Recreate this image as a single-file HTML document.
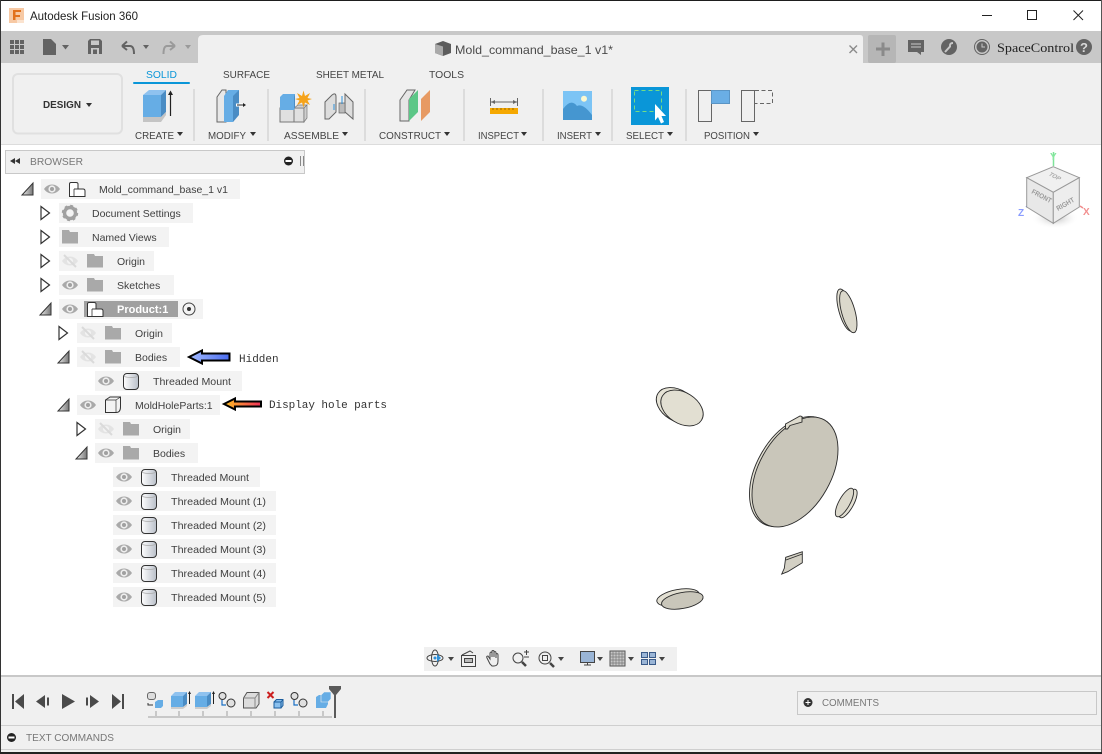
<!DOCTYPE html>
<html><head><meta charset="utf-8"><title>Autodesk Fusion 360</title>
<style>
html,body{margin:0;padding:0;background:#fff}
svg{display:block}
text{font-family:"Liberation Sans",Arial,sans-serif;font-size:10.5px;fill:#444}
.t{fill:#4a4a4a}
.r{fill:#3f3f3f;font-size:10.5px}
.m{font-family:"Liberation Mono",monospace;font-size:11px;fill:#333}
</style></head><body>
<svg xmlns="http://www.w3.org/2000/svg" width="1102" height="754" viewBox="0 0 1102 754">
<defs>
<linearGradient id="cyl" x1="0" x2="1" y1="0" y2="0"><stop offset="0" stop-color="#fff"/><stop offset="1" stop-color="#b9bfc9"/></linearGradient>
<linearGradient id="tri" x1="0" x2="1" y1="0" y2="0"><stop offset="0" stop-color="#eee"/><stop offset="1" stop-color="#777"/></linearGradient>
<linearGradient id="blueA" x1="1" x2="0" y1="0" y2="0"><stop offset="0" stop-color="#4a6cf0"/><stop offset="1" stop-color="#a5bcff"/></linearGradient>
<linearGradient id="orA" x1="1" x2="0" y1="0" y2="0"><stop offset="0" stop-color="#f0305a"/><stop offset="1" stop-color="#ffc020"/></linearGradient>
<radialGradient id="shadow"><stop offset="0" stop-color="#bbb"/><stop offset="1" stop-color="#fff" stop-opacity="0"/></radialGradient>
<g id="eye"><path d="M-8 0C-4-6 4-6 8 0C4 6-4 6-8 0Z" fill="#a9a9a9"/><circle r="3.6" fill="#eee"/><circle r="2" fill="#a0a0a0"/></g>
<g id="eyeh"><path d="M-8 0C-4-6 4-6 8 0C4 6-4 6-8 0Z" fill="#e3e3e3"/><circle r="3" fill="#f3f3f3"/><path d="M-6-6L6 6" stroke="#dadada" stroke-width="2"/></g>
<path id="fold" d="M0-7H7L8-5H16V6.500H0Z" fill="#a9a9a9"/>
<g id="exp"><path d="M-4-6.500V6.500L4.500 0Z" fill="#fff" stroke="#333" stroke-width="1.200"/></g>
<g id="col"><path d="M-5 6H6V-6Z" fill="url(#tri)" stroke="#333" stroke-width="1"/></g>
<g id="cyln"><rect x="-7.5" y="-7.5" width="15" height="16" rx="3.5" fill="url(#cyl)" stroke="#333" stroke-width="1"/><path d="M-7-4.500Q0-2.500 7-4.500" fill="none" stroke="#aaa" stroke-width=".7"/></g>
<g id="comp"><path d="M-7.500 6.500V-6Q-7.500-7.500-6-7.500H-1Q1-7.500 1-6V-1H6Q8-1 8 1V6.500Z" fill="#fff" stroke="#333"/><path d="M-3-1H1M-3-1L-3 6.500" fill="none" stroke="#333" stroke-width=".8"/><path d="M1 -1L-3 -1" stroke="#333" stroke-width=".8"/></g>
</defs>

<!-- window frame -->
<rect width="1102" height="754" fill="#f0f0f0"/>
<rect width="1102" height="1" fill="#1e1e1e"/>
<rect x="0" y="1" width="1102" height="30" fill="#fff"/>
<rect x="0" y="0" width="1" height="754" fill="#333"/>
<rect x="1101" y="0" width="1" height="754" fill="#555"/>
<rect x="0" y="752" width="1102" height="2" fill="#222"/>

<!-- title -->
<rect x="9" y="8" width="15" height="15" fill="#f7c9a4"/>
<path d="M13 10H21V12H15.500V15H20V17H15.500V20H13Z" fill="#e2711d"/>
<rect x="17" y="20" width="7" height="3" fill="#fbe3cf"/>
<text x="30" y="20" style="font-size:12px;fill:#222" textLength="108" lengthAdjust="spacingAndGlyphs">Autodesk Fusion 360</text>
<rect x="982" y="15" width="10" height="1" fill="#222"/>
<rect x="1027.500" y="10.500" width="9" height="9" fill="none" stroke="#222"/>
<path d="M1073.500 10.500L1083 20M1083 10.500L1073.500 20" stroke="#222" fill="none"/>

<!-- top toolbar -->
<rect x="1" y="31" width="1100" height="32" fill="#c8c8c8"/>
<path d="M198 63V40Q198 35 203 35H860Q863 35 863 38V63Z" fill="#f0f0f0"/>
<rect x="868" y="35" width="28" height="28" rx="2" fill="#b6b6b6"/>
<path d="M876 49H890M883 42.500V56" stroke="#8a8a8a" stroke-width="3"/>
<g fill="#636363">
<rect x="10" y="40" width="4" height="4"/><rect x="15" y="40" width="4" height="4"/><rect x="20" y="40" width="4" height="4"/>
<rect x="10" y="45" width="4" height="4"/><rect x="15" y="45" width="4" height="4"/><rect x="20" y="45" width="4" height="4"/>
<rect x="10" y="50" width="4" height="4"/><rect x="15" y="50" width="4" height="4"/><rect x="20" y="50" width="4" height="4"/>
<path d="M43 39H51L56 44V55H43Z"/>
<path d="M62 45H69L65.500 49.500Z"/>
<path d="M88 41L90 39H100L102 41V54H88ZM91 40.500V45H99V40.500ZM91 48V54H93V49.500H97V54H99V48Z" fill-rule="evenodd"/>
<path d="M143 45H149L146 49Z"/>
</g>
<path d="M122 46L127 41.500M122 46L127 50M122.500 46H130Q134 46 134 54" stroke="#636363" stroke-width="2" fill="none"/>
<path d="M175 46L170 41.500M175 46L170 50M174.500 46H167Q163.500 46 163.500 54" stroke="#9a9a9a" stroke-width="2" fill="none"/>
<path d="M185 45H191L188 49Z" fill="#9a9a9a"/>

<!-- doc tab -->
<path d="M435 44L443 41L451 44V53L443 56L435 53Z" fill="#5c5c5c"/><path d="M435 44L443 46.500V56L435 53Z" fill="#aaa"/>
<text x="455" y="54" style="font-size:12px" class="t" textLength="158" lengthAdjust="spacingAndGlyphs">Mold_command_base_1 v1*</text>
<path d="M849.500 45.500L857 53M857 45.500L849.500 53" stroke="#8a8a8a" stroke-width="1.400"/>

<!-- right toolbar -->
<path d="M908 40H924V52H921V55L917 52H908Z" fill="#636363"/><path d="M911 44H921M911 47H921" stroke="#c8c8c8"/>
<circle cx="949" cy="47" r="8" fill="#636363"/><path d="M945 52L950 46.500Q949.500 43 953 43" stroke="#c8c8c8" stroke-width="2" fill="none"/>
<circle cx="982" cy="47" r="7.500" fill="none" stroke="#636363"/><circle cx="982" cy="47" r="5.500" fill="#636363"/><path d="M982 43.500V47H985" stroke="#c8c8c8" fill="none"/>
<text x="997" y="52" style="font-family:'Liberation Serif',serif;font-size:13px;fill:#222" textLength="77" lengthAdjust="spacingAndGlyphs">SpaceControl</text>
<circle cx="1084" cy="47" r="8" fill="#636363"/><text x="1084" y="52" text-anchor="middle" style="font-size:13px;font-weight:bold;fill:#d8d8d8">?</text>

<!-- ribbon -->
<rect x="1" y="144" width="1100" height="1" fill="#dcdcdc"/>
<rect x="13" y="74" width="109" height="59.500" rx="5" fill="#f0f0f0" stroke="#e0e0e0" stroke-width="2"/>
<text x="43" y="108" style="font-weight:bold;fill:#333" textLength="38" lengthAdjust="spacingAndGlyphs">DESIGN</text>
<path d="M86 103H92L89 107Z" fill="#333"/>
<text x="146" y="78" style="fill:#0a96d8" textLength="31" lengthAdjust="spacingAndGlyphs">SOLID</text>
<rect x="133" y="82" width="57" height="2" rx="1" fill="#0a96d8"/>
<text x="223" y="78" textLength="47" lengthAdjust="spacingAndGlyphs">SURFACE</text><text x="316" y="78" textLength="68" lengthAdjust="spacingAndGlyphs">SHEET METAL</text><text x="429" y="78" textLength="35" lengthAdjust="spacingAndGlyphs">TOOLS</text>
<g fill="#dcdcdc"><rect x="193" y="89" width="2" height="52"/><rect x="267" y="89" width="2" height="52"/><rect x="364" y="89" width="2" height="52"/><rect x="463" y="89" width="2" height="52"/><rect x="542" y="89" width="2" height="52"/><rect x="611" y="89" width="2" height="52"/><rect x="685" y="89" width="2" height="52"/></g>
<text x="135" y="139" textLength="39" lengthAdjust="spacingAndGlyphs">CREATE</text><text x="208" y="139" textLength="38" lengthAdjust="spacingAndGlyphs">MODIFY</text><text x="284" y="139" textLength="55" lengthAdjust="spacingAndGlyphs">ASSEMBLE</text><text x="379" y="139" textLength="62" lengthAdjust="spacingAndGlyphs">CONSTRUCT</text><text x="478" y="139" textLength="41" lengthAdjust="spacingAndGlyphs">INSPECT</text><text x="557" y="139" textLength="35" lengthAdjust="spacingAndGlyphs">INSERT</text><text x="626" y="139" textLength="38" lengthAdjust="spacingAndGlyphs">SELECT</text><text x="704" y="139" textLength="46" lengthAdjust="spacingAndGlyphs">POSITION</text>
<g fill="#333"><path d="M177 132H183L180 136Z"/><path d="M250 132H256L253 136Z"/><path d="M342 132H348L345 136Z"/><path d="M444 132H450L447 136Z"/><path d="M521 132H527L524 136Z"/><path d="M595 132H601L598 136Z"/><path d="M667 132H673L670 136Z"/><path d="M753 132H759L756 136Z"/></g>
<!-- create -->
<path d="M143 95L149 90H166L161 95Z" fill="#8fc2ef"/><rect x="143" y="95" width="18" height="22" fill="#66ade5"/><path d="M161 95L166 90V112L161 117Z" fill="#4a8cc4"/><path d="M143 117H161L166 112V115L161 122H143Z" fill="#c4c4c4"/>
<path d="M170.500 116V93" stroke="#222" stroke-width="1.200"/><path d="M168 95L170.500 90.500L173 95Z" fill="#222"/>
<!-- modify -->
<path d="M217 122V97L222 90H226V122Z" fill="#e8e8e8" stroke="#666"/><path d="M224 96L228 90H239V114L233 122H224Z" fill="#66ade5"/><path d="M233 96L239 90V115L233 122Z" fill="#4a8cc4"/>
<path d="M236 105H243" stroke="#fff" stroke-width="3"/><path d="M237 105H243" stroke="#222"/><path d="M243 103L246 105L243 107Z" fill="#222"/>
<!-- assemble -->
<path d="M280 108H294V122H280ZM294 108H304V122H294Z" fill="#e0e0e0" stroke="#777"/><path d="M294 108L298 105H307L304 108ZM304 108L307 105V118L304 122Z" fill="#cfcfcf" stroke="#777" stroke-width=".7"/>
<path d="M280 97L283 94H295V107L294 110H280Z" fill="#66ade5"/><path d="M295 94V107L294 110V97Z" fill="#4a8cc4"/>
<path d="M303.500 90.500L305 96L310 93L307.500 98L312 99L307.500 100.500L310 105L305 102.500L303.500 107.500L302 102.500L297 105L299.500 100.500L295 99L299.500 98L297 93L302 96Z" fill="#f5a31a"/>
<path d="M325 102L332 95Q336 92 336 97V112L329 119H325Z" fill="#ddd" stroke="#666"/><path d="M345 94L353 102V119L345 112Z" fill="#ddd" stroke="#666"/><path d="M339 103H345V113H339Z" fill="#bbb" stroke="#666" stroke-width=".7"/>
<path d="M334 104V110M342 96V104" stroke="#2d8fd8" stroke-width="1"/>
<!-- construct -->
<path d="M400 100L407 90H415L409 100V121H400Z" fill="#e6e6e6" stroke="#666"/><path d="M409 99L418 90V112L409 121Z" fill="#5cc787"/>
<path d="M421 99L430 90V112L421 121Z" fill="#e79a63"/>
<!-- inspect -->
<path d="M490.500 98V106M517.500 98V106" stroke="#666"/><path d="M491 102H517" stroke="#666"/><path d="M491 102L495 100V104ZM517 102L513 100V104Z" fill="#666"/>
<rect x="490" y="108" width="28" height="6" fill="#f5a800"/><path d="M493 108v2M497 108v2M501 108v2M505 108v2M509 108v2M513 108v2" stroke="#885a00" stroke-width=".8"/>
<!-- insert -->
<rect x="563" y="91" width="29" height="29" fill="#7cc4f5"/><path d="M563 120V109Q571 98 577 106Q583 103 592 115V120Z" fill="#4596d0"/><circle cx="584" cy="98.700" r="3" fill="#fbf8d0"/>
<!-- select -->
<rect x="631" y="87" width="38" height="38" fill="#0a96d8"/><rect x="634.500" y="90.500" width="27" height="21" fill="none" stroke="#74dc84" stroke-dasharray="4 3"/>
<path d="M655 104L666 116H661.500L664 122L661 123.500L658 117L655 120.500Z" fill="#fff"/>
<!-- position -->
<rect x="698.500" y="90.500" width="13" height="31" fill="none" stroke="#666"/><rect x="711.500" y="90.500" width="18" height="13" fill="#6aaee5" stroke="#5a94c4"/>
<rect x="741.500" y="90.500" width="13" height="31" fill="none" stroke="#666"/><path d="M755 90.500H772.500V103.500H755" fill="none" stroke="#666" stroke-dasharray="4 2.500"/>

<!-- canvas -->
<rect x="1" y="145" width="1100" height="530" fill="#fff"/>
<!-- browser bar -->
<rect x="5.500" y="150.500" width="299" height="23" fill="#f0f0f0" stroke="#c8c8c8"/>
<path d="M10 161L15 158V164ZM15 161L20 158V164Z" fill="#333"/>
<text x="30" y="165" style="fill:#777" textLength="53" lengthAdjust="spacingAndGlyphs">BROWSER</text>
<circle cx="288.500" cy="161" r="4.500" fill="#222"/><rect x="285.500" y="160" width="6" height="2" fill="#fff"/>
<path d="M300.500 156V166M303.500 156V166" stroke="#888"/>

<!-- rows -->
<g fill="#f3f3f3">
<rect x="41" y="179" width="199" height="20"/><rect x="59" y="203" width="134" height="20"/><rect x="59" y="227" width="110" height="20"/><rect x="59" y="251" width="95" height="20"/><rect x="59" y="275" width="115" height="20"/><rect x="59" y="299" width="144" height="20"/><rect x="77" y="323" width="95" height="20"/><rect x="77" y="347" width="103" height="20"/><rect x="95" y="371" width="147" height="20"/><rect x="77" y="395" width="143" height="20"/><rect x="95" y="419" width="95" height="20"/><rect x="95" y="443" width="103" height="20"/><rect x="113" y="467" width="147" height="20"/><rect x="113" y="491" width="163" height="20"/><rect x="113" y="515" width="163" height="20"/><rect x="113" y="539" width="163" height="20"/><rect x="113" y="563" width="163" height="20"/><rect x="113" y="587" width="163" height="20"/>
</g>
<rect x="84" y="301" width="94" height="16" fill="#a0a0a0"/>

<use href="#col" x="27" y="189"/><use href="#eye" x="52" y="189"/><use href="#comp" x="77" y="190"/>
<use href="#exp" x="45" y="213"/><use href="#exp" x="45" y="237"/><use href="#exp" x="45" y="261"/><use href="#exp" x="45" y="285"/><use href="#col" x="45" y="309"/>
<use href="#exp" x="63" y="333"/><use href="#col" x="63" y="357"/><use href="#col" x="63" y="405"/>
<use href="#exp" x="81" y="429"/><use href="#col" x="81" y="453"/>

<g transform="translate(70 213)"><circle r="5.500" fill="none" stroke="#a0a0a0" stroke-width="3.400"/><circle r="7.200" fill="none" stroke="#a0a0a0" stroke-width="2" stroke-dasharray="2.800 2.850"/></g>
<use href="#fold" x="62" y="237"/>
<use href="#eyeh" x="70" y="261"/><use href="#fold" x="87" y="261"/>
<use href="#eye" x="70" y="285"/><use href="#fold" x="87" y="285"/>
<use href="#eye" x="70" y="309"/><use href="#comp" x="95" y="310"/>
<circle cx="189" cy="309" r="6" fill="#f3f3f3" stroke="#444"/><circle cx="189" cy="309" r="2" fill="#333"/>
<use href="#eyeh" x="88" y="333"/><use href="#fold" x="105" y="333"/>
<use href="#eyeh" x="88" y="357"/><use href="#fold" x="105" y="357"/>
<use href="#eye" x="106" y="381"/><use href="#cyln" x="131" y="381"/>
<use href="#eye" x="88" y="405"/>
<path d="M105.500 400L110 397H120.500V407Q120.500 412.500 116 412.500H105.500Z" fill="#f3f3f3" stroke="#333"/><path d="M105.500 400H116V412.500M116 400L120.500 397" fill="none" stroke="#333" stroke-width=".7"/>
<use href="#eyeh" x="106" y="429"/><use href="#fold" x="123" y="429"/>
<use href="#eye" x="106" y="453"/><use href="#fold" x="123" y="453"/>
<use href="#eye" x="124" y="477"/><use href="#cyln" x="149" y="477"/>
<use href="#eye" x="124" y="501"/><use href="#cyln" x="149" y="501"/>
<use href="#eye" x="124" y="525"/><use href="#cyln" x="149" y="525"/>
<use href="#eye" x="124" y="549"/><use href="#cyln" x="149" y="549"/>
<use href="#eye" x="124" y="573"/><use href="#cyln" x="149" y="573"/>
<use href="#eye" x="124" y="597"/><use href="#cyln" x="149" y="597"/>

<text class="r" x="99" y="193">Mold_command_base_1 v1</text>
<text class="r" x="92" y="217">Document Settings</text>
<text class="r" x="92" y="241">Named Views</text>
<text class="r" x="117" y="265">Origin</text>
<text class="r" x="117" y="289">Sketches</text>
<text x="117" y="313" style="font-size:11px;font-weight:bold;fill:#fff">Product:1</text>
<text class="r" x="135" y="337">Origin</text>
<text class="r" x="135" y="361">Bodies</text>
<text class="r" x="153" y="385" textLength="78" lengthAdjust="spacingAndGlyphs">Threaded Mount</text>
<text class="r" x="135" y="409">MoldHoleParts:1</text>
<text class="r" x="153" y="433">Origin</text>
<text class="r" x="153" y="457">Bodies</text>
<text class="r" x="171" y="481" textLength="78" lengthAdjust="spacingAndGlyphs">Threaded Mount</text>
<text class="r" x="171" y="505" textLength="95" lengthAdjust="spacingAndGlyphs">Threaded Mount (1)</text>
<text class="r" x="171" y="529" textLength="95" lengthAdjust="spacingAndGlyphs">Threaded Mount (2)</text>
<text class="r" x="171" y="553" textLength="95" lengthAdjust="spacingAndGlyphs">Threaded Mount (3)</text>
<text class="r" x="171" y="577" textLength="95" lengthAdjust="spacingAndGlyphs">Threaded Mount (4)</text>
<text class="r" x="171" y="601" textLength="95" lengthAdjust="spacingAndGlyphs">Threaded Mount (5)</text>

<!-- arrows -->
<path d="M189 357L202 350.500V353.500H229.500V360.500H202V363.500Z" fill="url(#blueA)" stroke="#000" stroke-width="2"/>
<path d="M224 404L235 398.500V401.500H261V406.500H235V409.500Z" fill="url(#orA)" stroke="#000" stroke-width="2"/>
<text class="m" x="239" y="362">Hidden</text>
<text class="m" x="269" y="408" textLength="118">Display hole parts</text>

<!-- model -->
<g stroke="#2a2a2a" stroke-width=".9">
<ellipse cx="845.500" cy="310" rx="21.700" ry="6.700" transform="rotate(74.500 845.500 310)" fill="#e2dfd2"/>
<ellipse cx="848.300" cy="311.700" rx="21.700" ry="6.700" transform="rotate(74.500 848.300 311.700)" fill="#dbd8cb"/>
<ellipse cx="677.500" cy="405.500" rx="23" ry="15.500" transform="rotate(32 677.500 405.500)" fill="#e6e3d6"/>
<ellipse cx="682" cy="408" rx="23" ry="15.500" transform="rotate(32 682 408)" fill="#e2dfd2"/>
<ellipse cx="792.500" cy="471.500" rx="59.800" ry="36" transform="rotate(-60.500 792.500 471.500)" fill="#e2dfd2"/>
<ellipse cx="795" cy="472" rx="59.800" ry="36" transform="rotate(-60.500 795 472)" fill="#c9c6ba"/>
<path d="M785.500 429V424L800 416L802 416.500V422L790 425.500L787.500 429Z" fill="#dedbce"/>
<ellipse cx="848" cy="503.500" rx="16" ry="5.500" transform="rotate(-61 848 503.500)" fill="#e2dfd2"/>
<ellipse cx="844.500" cy="502.500" rx="16" ry="5.500" transform="rotate(-61 844.500 502.500)" fill="#dbd8cb"/>
<path d="M785.700 557.300L802.300 551.700V562.700L787.700 571.700L781.700 574L784.300 568.300Z" fill="#d3d0c4"/>
<path d="M786 560L802.300 554" fill="none"/>
<ellipse cx="678" cy="597.500" rx="21.500" ry="8" transform="rotate(-10.500 678 597.500)" fill="#e2dfd2"/>
<ellipse cx="682.300" cy="600.500" rx="21.100" ry="8" transform="rotate(-10.500 682.300 600.500)" fill="#c9c6ba"/>
</g>

<!-- viewcube -->
<ellipse cx="1055" cy="218" rx="24" ry="11" fill="url(#shadow)"/>
<path d="M1053.500 152V166" stroke="#7fe39a" stroke-width="1.500"/><text x="1050" y="160" style="font-size:10px;fill:#86e89f;font-weight:bold">Y</text>
<path d="M1026 207L1029 205" stroke="#5a74e8" stroke-width="1.500"/><text x="1018" y="216" style="font-size:10px;fill:#8a9cff;font-weight:bold">Z</text>
<path d="M1080 206L1083 208" stroke="#f08a8a" stroke-width="1.500"/><text x="1083" y="215" style="font-size:10px;fill:#f28f8f;font-weight:bold">X</text>
<path d="M1053.300 166.700L1079.300 177.700L1053.300 192.300L1026.700 177.700Z" fill="#f0f0f0" stroke="#999"/>
<path d="M1026.700 177.700L1053.300 192.300V223.300L1026.700 207Z" fill="#e8e8e8" stroke="#999"/>
<path d="M1079.300 177.700L1053.300 192.300V223.300L1079.300 207Z" fill="#ededed" stroke="#999"/>
<text transform="translate(1048 175) rotate(28) skewX(-20)" style="font-size:6px;fill:#aaa;font-weight:bold">TOP</text>
<text transform="translate(1031 193) rotate(28) scale(.9 1)" style="font-size:7px;fill:#999;font-weight:bold">FRONT</text>
<text transform="translate(1058 211) rotate(-30) scale(.9 1)" style="font-size:7px;fill:#999;font-weight:bold">RIGHT</text>

<!-- nav bar -->
<rect x="424" y="647" width="253" height="24" fill="#f0f0f0"/>
<g fill="none" stroke="#444" stroke-width="1">
<ellipse cx="435" cy="658" rx="3.500" ry="8"/><ellipse cx="435" cy="658" rx="8" ry="3.500"/>
<rect x="461.500" y="655.500" width="14" height="11"/><rect x="464.500" y="658.500" width="8" height="4" fill="#bbb"/><path d="M462 655L470 651L473 653"/>
<path d="M490 664L487 658Q486 656 488 656L490 659V653Q491 651 492 653V657V651Q493 650 494 651V657V652Q496 651 496 653V658V654Q498 653 498 655V661Q498 666 494 666H492Z"/>
<circle cx="518" cy="658" r="5"/><path d="M522 662L526 666" stroke-width="2.500"/><path d="M524 652H529M526.500 650V655M524 657H529"/>
<circle cx="545" cy="658" r="6"/><rect x="542.500" y="655.500" width="5" height="5"/><path d="M550 663L554 667" stroke-width="2.500"/>
<rect x="580.500" y="651.500" width="14" height="11" fill="#9ab5d6"/><path d="M584 665H591M587.500 663V665"/>
</g>
<path d="M441 658L437 654V662Z" fill="#2d8fd8"/><circle cx="435" cy="658" r="1.500" fill="#2d8fd8"/>
<g fill="#444"><path d="M448 657H454L451 661Z"/><path d="M558 657H564L561 661Z"/><path d="M597 657H603L600 661Z"/><path d="M628 657H634L631 661Z"/><path d="M659 657H665L662 661Z"/></g>
<rect x="610" y="651" width="15" height="15" fill="#c8c8c8" stroke="#555"/>
<path d="M613 651V666M616 651V666M619 651V666M622 651V666M610 654H625M610 657H625M610 660H625M610 663H625" stroke="#777" stroke-width=".7"/>
<g fill="#9ab5d6" stroke="#3a5a88"><rect x="641.500" y="652.500" width="6" height="5"/><rect x="649.500" y="652.500" width="6" height="5"/><rect x="641.500" y="659.500" width="6" height="5"/><rect x="649.500" y="659.500" width="6" height="5"/></g>

<!-- bottom -->
<rect x="1" y="675" width="1100" height="2" fill="#c8c8c8"/>
<rect x="1" y="725" width="1100" height="1" fill="#cfcfcf"/>
<rect x="1" y="749" width="1100" height="1" fill="#cfcfcf"/>
<g fill="#4a4a4a">
<rect x="12" y="694" width="2" height="15"/><path d="M24 694V709L15 701.500Z"/>
<path d="M36 701.500L45 695V708ZM47 697.500H49V705.500H47Z"/>
<path d="M62 694L75 701.500L62 709Z"/>
<path d="M86 697.500H88V705.500H86ZM90 695L99 701.500L90 708Z"/>
<path d="M112 694L121 701.500L112 709ZM122 694H124V709H122Z"/>
</g>
<!-- timeline -->
<rect x="148" y="716" width="184" height="2" fill="#c8c8c8"/>
<g fill="#c8c8c8"><rect x="155" y="711" width="2" height="6"/><rect x="178" y="711" width="2" height="6"/><rect x="202" y="711" width="2" height="6"/><rect x="226" y="711" width="2" height="6"/><rect x="250" y="711" width="2" height="6"/><rect x="274" y="711" width="2" height="6"/><rect x="298" y="711" width="2" height="6"/><rect x="322" y="711" width="2" height="6"/></g>
<rect x="147.500" y="692.500" width="8" height="7" rx="2.500" fill="#ddd" stroke="#666"/><path d="M148 703V705H153" stroke="#333" fill="none"/>
<path d="M155 702L158 700H163V706L161 708H155Z" fill="#66ade5"/>
<g transform="translate(180 699)"><path d="M-9-3L-5-7H7L3-3Z" fill="#8fc2ef"/><rect x="-9" y="-3" width="12" height="11" fill="#66ade5"/><path d="M3-3L7-7V5L3 8Z" fill="#4a8cc4"/><path d="M-9 8H3L7 5V7L3 10H-9Z" fill="#ccc"/><path d="M9.500 5V-6" stroke="#222"/><path d="M8-5L9.500-8L11-5Z" fill="#222"/></g>
<g transform="translate(204 699)"><path d="M-9-3L-5-7H7L3-3Z" fill="#8fc2ef"/><rect x="-9" y="-3" width="12" height="11" fill="#66ade5"/><path d="M3-3L7-7V5L3 8Z" fill="#4a8cc4"/><path d="M-9 8H3L7 5V7L3 10H-9Z" fill="#ccc"/><path d="M9.500 5V-6" stroke="#222"/><path d="M8-5L9.500-8L11-5Z" fill="#222"/></g>
<g fill="#e0e0e0" stroke="#333"><circle cx="222.500" cy="696" r="3.500"/><circle cx="231" cy="703" r="4"/><circle cx="294.500" cy="696" r="3.500"/><circle cx="303" cy="703" r="4"/></g>
<path d="M222 700V705H226M294 700V705H298" stroke="#1a6fc4" stroke-width="1.200" fill="none"/>
<path d="M243.500 698L247 692.500H259V704L256 708H243.500Z" fill="#dcdcdc" stroke="#555"/><path d="M243.500 698H255V708M255 698L259 692.500" fill="none" stroke="#888"/>
<path d="M267.500 692L273.500 698M273.500 692L267.500 698" stroke="#cc1f1f" stroke-width="2"/>
<path d="M274 702H281V708H274ZM274 702L276.500 699.500H283V705.500L281 708M281 702L283 699.500" fill="#8ac0ee" stroke="#1a5c9c"/>
<path d="M316 697L319 695H326V701H328V704L326 708H316Z" fill="#66ade5"/>
<path d="M321 695L324 692H331V699L328 702H321Z" fill="#66ade5" stroke="#f0f0f0" stroke-width=".6"/>
<path d="M329 686H341V689L336 695V718H334V695L329 689Z" fill="#5a5a5a"/>

<!-- comments -->
<rect x="797.500" y="691.500" width="299" height="23" fill="#f0f0f0" stroke="#c8c8c8"/>
<circle cx="808" cy="702.500" r="4.500" fill="#333"/><path d="M805.500 702.500H810.500M808 700V705" stroke="#fff"/>
<text x="822" y="706" style="fill:#777" textLength="57" lengthAdjust="spacingAndGlyphs">COMMENTS</text>
<circle cx="11.500" cy="737.500" r="4.500" fill="#222"/><rect x="8.500" y="736.500" width="6" height="2" fill="#fff"/>
<text x="26" y="741" style="fill:#777" textLength="88" lengthAdjust="spacingAndGlyphs">TEXT COMMANDS</text>
</svg>
</body></html>
